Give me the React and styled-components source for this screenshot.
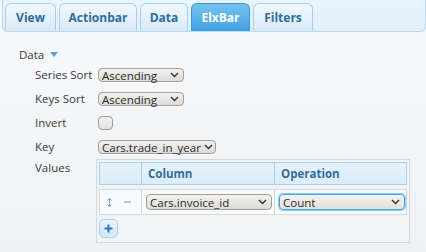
import React from "react";
import styled, { createGlobalStyle } from "styled-components";

const TEXT = "#3a3a3a";
const BLUE_TEXT = "#2f6d9c";
const BLUE_BORDER = "#a9cfee";

const GlobalStyle = createGlobalStyle`
  html, body {
    margin: 0;
    padding: 0;
  }
  body {
    font-family: "Open Sans", "DejaVu Sans", sans-serif;
    font-size: 11.5px;
    color: ${TEXT};
  }
`;

const Page = styled.div`
  width: 426px;
  height: 252px;
  overflow: hidden;
  background: linear-gradient(180deg, #f8f9fb 0%, #eef2f6 100%);
`;

const TabBar = styled.div`
  display: flex;
  align-items: flex-end;
  gap: 3px;
  height: 36px;
  margin: -4px 0 0 2px;
  padding-left: 2px;
  box-sizing: border-box;
  border: 1px solid #b9d8f1;
  border-radius: 5px;
  background: linear-gradient(180deg, #eaf4fc 0%, #e2eff9 100%);
`;

const Tab = styled.div`
  box-sizing: border-box;
  height: 28px;
  width: ${({ width }) => width}px;
  display: flex;
  align-items: center;
  justify-content: center;
  font-weight: 700;
  font-size: 12px;
  border: 1px solid ${({ active }) => (active ? "#3a97d8" : BLUE_BORDER)};
  border-bottom: none;
  border-radius: 6px 6px 0 0;
  color: ${({ active }) => (active ? "#ffffff" : BLUE_TEXT)};
  background: ${({ active }) =>
    active
      ? "linear-gradient(180deg, #74c1ef 0%, #5cb3ea 50%, #3f9fe0 100%)"
      : "linear-gradient(180deg, #eff7fd 0%, #e5f1fb 50%, #d8e9f7 100%)"};
`;

const Content = styled.div`
  padding: 14px 0 0 19px;
`;

const SectionHead = styled.div`
  display: flex;
  align-items: center;
  gap: 6px;
  height: 16px;
`;

const Caret = styled.span`
  width: 0;
  height: 0;
  border-left: 4px solid transparent;
  border-right: 4px solid transparent;
  border-top: 5px solid #5b9fd6;
`;

const Form = styled.div`
  padding: 1px 0 0 16px;
`;

const Row = styled.div`
  display: flex;
  align-items: ${({ top }) => (top ? "flex-start" : "center")};
  min-height: 24px;
`;

const Label = styled.div`
  width: 63px;
  flex: none;
  line-height: 16px;
  white-space: nowrap;
  padding-top: ${({ top }) => (top ? "1px" : "0")};
`;

const Select = styled.div`
  box-sizing: border-box;
  display: inline-flex;
  align-items: center;
  justify-content: space-between;
  gap: 3px;
  width: ${({ width }) => width}px;
  height: ${({ tall }) => (tall ? 16 : 14)}px;
  padding: 0 4px 0 3px;
  color: #2b2b2b;
  white-space: nowrap;
  border: 1px solid ${({ focused }) => (focused ? "#4ba4e2" : "#a19e98")};
  border-radius: 4px;
  background: ${({ focused }) =>
    focused
      ? "linear-gradient(180deg, #f3f2f0 0%, #e2e0dc 100%)"
      : "linear-gradient(180deg, #f3f2f0 0%, #dddbd7 100%)"};
  box-shadow: ${({ focused }) =>
    focused ? "0 0 0 1px #8ccbf1" : "0 1px 0 rgba(255,255,255,0.7)"};

  svg {
    flex: none;
  }
`;

const Chevron = () => (
  <svg width="9" height="6" viewBox="0 0 9 6">
    <path d="M1 1 L4.5 4.5 L8 1" fill="none" stroke="#333" strokeWidth="1.4" />
  </svg>
);

const Checkbox = styled.div`
  box-sizing: border-box;
  width: 15px;
  height: 14px;
  border: 1px solid #a19e98;
  border-radius: 4px;
  background: linear-gradient(180deg, #f3f2f0 0%, #e4e2de 100%);
`;

const TableBox = styled.div`
  box-sizing: border-box;
  width: 314px;
  height: 84px;
  margin-left: -2px;
  padding: 2px;
  border: 1px solid #d6dade;
  background: #f1f4f7;
`;

const Grid = styled.div`
  display: grid;
  grid-template-columns: 41px 133px 134px;
  box-sizing: border-box;
  border: 1px solid ${({ head }) => (head ? BLUE_BORDER : "#d5d9dc")};
  background: ${({ head }) =>
    head ? "linear-gradient(180deg, #e6f2fb 0%, #dcecf9 100%)" : "#f9fafb"};
  height: ${({ head }) => (head ? 23 : 26)}px;
  margin-bottom: 4px;
`;

const Cell = styled.div`
  display: flex;
  align-items: center;
  gap: ${({ gap }) => gap || 0}px;
  padding-left: ${({ pad }) => pad}px;
  border-left: ${({ first, head }) =>
    first ? "none" : `1px solid ${head ? BLUE_BORDER : "#d5d9dc"}`};
  font-weight: ${({ head }) => (head ? 700 : 400)};
  color: ${({ head }) => (head ? BLUE_TEXT : TEXT)};
`;

const Minus = styled.span`
  width: 7px;
  height: 2px;
  background: #b3cfe6;
`;

const AddButton = styled.div`
  box-sizing: border-box;
  width: 19px;
  height: 19px;
  display: flex;
  align-items: center;
  justify-content: center;
  border: 1px solid ${BLUE_BORDER};
  border-radius: 5px;
  background: linear-gradient(180deg, #e8f3fc 0%, #d3e7f7 100%);
`;

export default function App() {
  return (
    <>
      <GlobalStyle />
      <Page>
        <TabBar>
          <Tab width={51}>View</Tab>
          <Tab width={78}>Actionbar</Tab>
          <Tab width={48}>Data</Tab>
          <Tab width={59} active>ElxBar</Tab>
          <Tab width={60}>Filters</Tab>
        </TabBar>
        <Content>
          <SectionHead>
            Data <Caret />
          </SectionHead>
          <Form>
            <Row>
              <Label>Series Sort</Label>
              <Select width={86}>
                Ascending <Chevron />
              </Select>
            </Row>
            <Row>
              <Label>Keys Sort</Label>
              <Select width={86}>
                Ascending <Chevron />
              </Select>
            </Row>
            <Row>
              <Label>Invert</Label>
              <Checkbox />
            </Row>
            <Row>
              <Label>Key</Label>
              <Select width={118}>
                Cars.trade_in_year <Chevron />
              </Select>
            </Row>
            <Row top>
              <Label top>Values</Label>
              <TableBox>
                <Grid head>
                  <Cell first head />
                  <Cell head pad={6}>Column</Cell>
                  <Cell head pad={6}>Operation</Cell>
                </Grid>
                <Grid>
                  <Cell first pad={7} gap={12}>
                    <svg width="5" height="9" viewBox="0 0 5 9">
                      <path
                        d="M2.5 0.5 V8.5 M0.5 2.5 L2.5 0.5 L4.5 2.5 M0.5 6.5 L2.5 8.5 L4.5 6.5"
                        fill="none"
                        stroke="#6fa6d2"
                        strokeWidth="1"
                      />
                    </svg>
                    <Minus />
                  </Cell>
                  <Cell pad={4}>
                    <Select width={126} tall>
                      Cars.invoice_id <Chevron />
                    </Select>
                  </Cell>
                  <Cell pad={4}>
                    <Select width={126} tall focused>
                      Count <Chevron />
                    </Select>
                  </Cell>
                </Grid>
                <AddButton>
                  <svg width="9" height="9" viewBox="0 0 9 9">
                    <path d="M4.5 0.5 V8.5 M0.5 4.5 H8.5" stroke="#2c7bbd" strokeWidth="2" />
                  </svg>
                </AddButton>
              </TableBox>
            </Row>
          </Form>
        </Content>
      </Page>
    </>
  );
}
